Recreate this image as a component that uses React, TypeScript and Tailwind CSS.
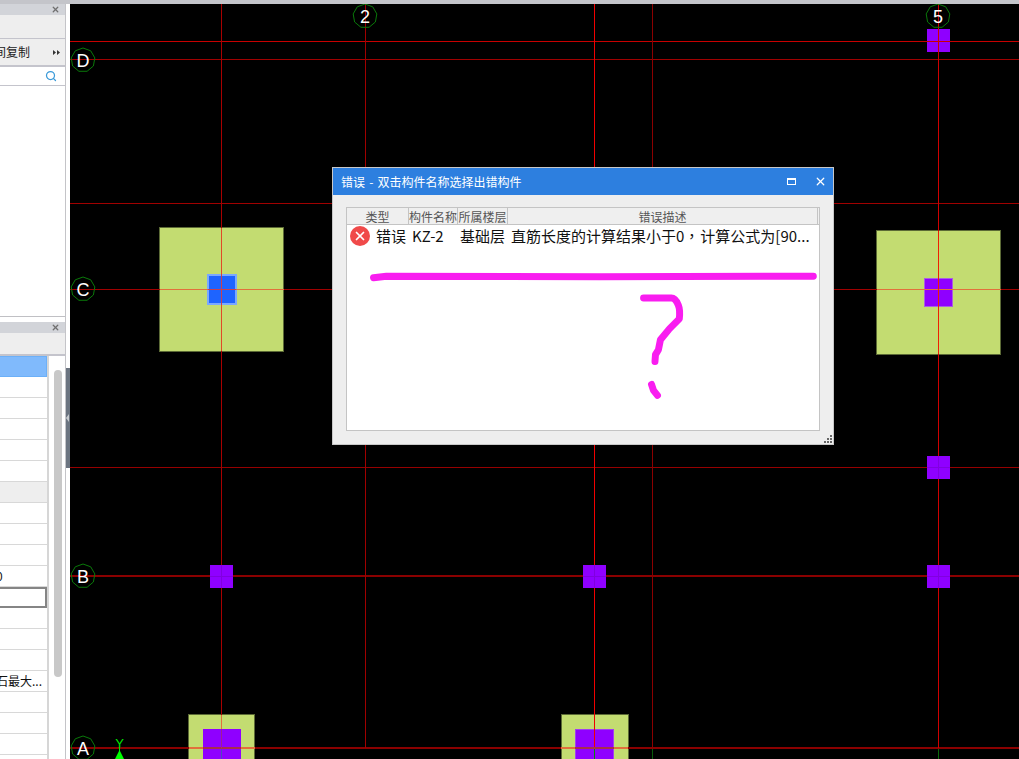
import React from "react";
import { Search, X } from "lucide-react";

const cjk = "font-['Noto_Sans_CJK_SC','Liberation_Sans',sans-serif]";

const hLines = [
  { y: 41, color: "#c80000", w: 1 },
  { y: 59, color: "#a00000", w: 1 },
  { y: 203, color: "#a00000", w: 1 },
  { y: 289, color: "#a00000", w: 1 },
  { y: 467, color: "#960000", w: 1 },
  { y: 576, color: "#8b0000", w: 2 },
  { y: 748, color: "#8b0000", w: 2 },
];

const vLines = [
  { x: 221, color: "#a80000", end: 759 },
  { x: 365, color: "#a00000", end: 748 },
  { x: 594, color: "#f00000", end: 748 },
  { x: 652, color: "#8b0000", end: 748 },
  { x: 938, color: "#d00000", end: 748 },
];

// these sit over the axis lines, the axes only show faintly through them
const smallCols = [
  [927, 456],
  [927, 565],
  [210, 565],
  [583, 565],
];

const axes = [
  { label: "2", x: 365, y: 16 },
  { label: "5", x: 938, y: 16 },
  { label: "D", x: 83, y: 60 },
  { label: "C", x: 83, y: 289 },
  { label: "B", x: 83, y: 576 },
  { label: "A", x: 83, y: 748 },
];

// the axis bubbles are coarse polygons in the cad view, not real circles
const bubble = (cx: number, cy: number) =>
  Array.from({ length: 9 }, (_, i) => {
    const a = (i / 9) * Math.PI * 2 - Math.PI / 2;
    return `${cx + Math.cos(a) * 12},${cy + Math.sin(a) * 12}`;
  }).join(" ");

const CadDrawing = () => (
  <svg className="block w-full h-full" viewBox="70 4 949 755" shapeRendering="crispEdges">
    <rect x="159.5" y="227.5" width="124" height="124" fill="#c3dc71" stroke="#5c6a36" strokeWidth="1" />
    <rect x="876.5" y="230.5" width="124" height="124" fill="#c3dc71" stroke="#5c6a36" strokeWidth="1" />
    <rect x="188.5" y="714.5" width="66" height="60" fill="#c3dc71" stroke="#5c6a36" strokeWidth="1" />
    <rect x="561" y="714.5" width="67" height="60" fill="#c3dc71" stroke="#5c6a36" strokeWidth="1" />

    <rect x="208" y="275" width="28" height="29" fill="#1e64ff" stroke="#7aa8ff" strokeWidth="2" />
    <rect x="924.5" y="278.5" width="28" height="28" fill="#8f00ff" stroke="#a860e0" strokeWidth="1" />
    <rect x="203" y="729" width="38" height="40" fill="#8f00ff" />
    <rect x="575.5" y="729.5" width="38" height="40" fill="#8f00ff" stroke="#a040f0" strokeWidth="1" />
    <rect x="927" y="29" width="23" height="23" fill="#8f00ff" />

    {hLines.map((l) => (
      <line key={l.y} x1="70" x2="1019" y1={l.w === 1 ? l.y + 0.5 : l.y} y2={l.w === 1 ? l.y + 0.5 : l.y} stroke={l.color} strokeWidth={l.w} />
    ))}
    {vLines.map((l) => (
      <line key={l.x} x1={l.x + 0.5} x2={l.x + 0.5} y1="4" y2={l.end} stroke={l.color} strokeWidth="1" />
    ))}

    {/* where the axes cross the footings they show lighter */}
    <line x1="160" x2="284" y1="289.5" y2="289.5" stroke="#e2703c" />
    <line x1="221.5" x2="221.5" y1="228" y2="351" stroke="#e04a28" />
    <line x1="877" x2="1001" y1="289.5" y2="289.5" stroke="#e2703c" />
    <line x1="938.5" x2="938.5" y1="231" y2="354" stroke="#f02000" />
    <line x1="189" x2="255" y1="748" y2="748" stroke="#e2703c" strokeWidth="2" />
    <line x1="561" x2="628" y1="748" y2="748" stroke="#e2703c" strokeWidth="2" />
    <line x1="221.5" x2="221.5" y1="715" y2="729" stroke="#e2703c" />
    <line x1="203" x2="241" y1="748" y2="748" stroke="#a83048" strokeWidth="2" />
    <line x1="575" x2="614" y1="748" y2="748" stroke="#a83048" strokeWidth="2" />
    <line x1="221.5" x2="221.5" y1="729" y2="748" stroke="#a02090" />
    <line x1="221.5" x2="221.5" y1="749" y2="759" stroke="#5048c0" />
    <line x1="208" x2="236" y1="289.5" y2="289.5" stroke="#c84050" />
    <line x1="221.5" x2="221.5" y1="275" y2="304" stroke="#c84050" />
    <line x1="594.5" x2="594.5" y1="749" y2="759" stroke="#0a8a0a" />
    <line x1="652.5" x2="652.5" y1="749" y2="759" stroke="#0a5a0a" />
    <line x1="938.5" x2="938.5" y1="749" y2="759" stroke="#0a6a0a" />

    {smallCols.map(([x, y]) => (
      <g key={`${x}-${y}`}>
        <rect x={x} y={y} width="23" height="23" fill="#8f00ff" />
        <line x1={x} x2={x + 23} y1={y + 11.5} y2={y + 11.5} stroke="#8000e0" />
        <line x1={x + 11.5} x2={x + 11.5} y1={y} y2={y + 23} stroke="#8000e0" />
      </g>
    ))}

    {axes.map((a) => (
      <g key={a.label}>
        <polygon points={bubble(a.x, a.y)} fill="none" stroke="#0a7a0a" strokeWidth="1" shapeRendering="auto" />
        <text x={a.x} y={a.y + 6.5} textAnchor="middle" fill="#ffffff" fontSize="18" fontFamily="Liberation Sans, sans-serif" shapeRendering="auto">
          {a.label}
        </text>
      </g>
    ))}

    <text x="119.5" y="748" textAnchor="middle" fill="#00e800" fontSize="13" fontFamily="Liberation Sans, sans-serif">
      Y
    </text>
    <line x1="119.5" x2="119.5" y1="747" y2="752" stroke="#00e800" />
    <polygon points="119.5,750 124,759 115,759" fill="#00ff00" shapeRendering="auto" />
  </svg>
);

const ScribbleOverlay = () => (
  <svg className="absolute inset-0 w-full h-full pointer-events-none" viewBox="332 167 502 278" fill="none" stroke="#f91df0" strokeLinecap="round" strokeLinejoin="round">
    <path d="M372 277.5 L385 276 L600 276.5 L815 276" strokeWidth="7" />
    <path d="M644 298 L672 298 Q676 298 679 305 Q681 310 680 319 L670 329 L661 340 L659 350 L656 355 L655.5 362" strokeWidth="7" />
    <path d="M652 385 L654 391 L658 396" strokeWidth="7" />
  </svg>
);

const ErrorDialog = () => (
  <div className={`absolute left-[262px] top-[163px] w-[502px] h-[278px] flex flex-col bg-[#eeeeee] border border-[#c8c8c8] ${cjk}`}>
    <div className="h-[27px] shrink-0 flex items-center bg-[#2d7fdf] text-white text-[12px] pl-[8px]">
      <span className="flex-1 [word-spacing:1.5px]">错误 - 双击构件名称选择出错构件</span>
      <span className="w-[9px] h-[7px] border border-white border-t-2 mr-[18px]"></span>
      <X size={13} strokeWidth={2.25} className="mr-[6px]" />
    </div>
    <div className="flex-1 flex px-[13px] pt-[12px] pb-[13px] min-h-0">
      <div className="flex-1 flex flex-col bg-white border border-[#c4c4c4]">
        <div className="h-[17px] shrink-0 flex bg-[#efefef] border-b border-[#c4c4c4] text-[12px] leading-[17px] text-[#555555] text-center">
          <div className="w-[62px] border-r border-[#c4c4c4]">类型</div>
          <div className="w-[49px] border-r border-[#c4c4c4] whitespace-nowrap">构件名称</div>
          <div className="w-[50px] border-r border-[#c4c4c4] whitespace-nowrap">所属楼层</div>
          <div className="flex-1 border-r border-[#c4c4c4] mr-[1px]">错误描述</div>
        </div>
        <div className="h-[22px] flex items-center text-[15px] text-[#111111] whitespace-nowrap">
          <div className="w-[29px] pl-[3px]">
            <div className="w-[20px] h-[20px] rounded-full bg-[#f04a4a] flex items-center justify-center text-white">
              <X size={14} strokeWidth={3} />
            </div>
          </div>
          <div className="w-[36px]">错误</div>
          <div className="w-[48px]">KZ-2</div>
          <div className="w-[51px]">基础层</div>
          <div>
            直筋长度的计算结果小于0
            <span className="font-['Noto_Sans_CJK_TC',sans-serif] mr-[1px]">，</span>
            计算公式为[90...
          </div>
        </div>
      </div>
    </div>
    <div className="absolute right-[1px] bottom-[1px] grid grid-cols-3 grid-rows-3 gap-[1px] w-[8px] h-[8px]">
      <span></span>
      <span></span>
      <span className="bg-[#666666]"></span>
      <span></span>
      <span className="bg-[#666666]"></span>
      <span className="bg-[#666666]"></span>
      <span className="bg-[#666666]"></span>
      <span className="bg-[#666666]"></span>
      <span className="bg-[#666666]"></span>
    </div>
    <ScribbleOverlay />
  </div>
);

const PanelTitle = () => (
  <div className="h-[11px] shrink-0 flex items-center justify-end pr-[5px] bg-[#d2d4d9] text-[#707070]">
    <X size={9} strokeWidth={3.5} />
  </div>
);

const rowCount = 20;

const PropertyRows = () => (
  <div className="flex-1 flex min-h-0">
    <div className="w-[49px] border-r-2 border-[#d6d6d6] flex flex-col text-[12px] text-[#111111] overflow-hidden">
      {Array.from({ length: rowCount }, (_, i) => {
        if (i === 0) {
          return <div key={i} className="h-[21px] shrink-0 bg-[#80bafc] border border-l-0 border-[#6cb0f8]"></div>;
        }
        if (i === 11) {
          return <div key={i} className="h-[21px] shrink-0 bg-white border-2 border-l-0 border-[#858585]"></div>;
        }
        return (
          <div key={i} className={`h-[21px] shrink-0 flex items-center border-b border-[#d8d8d8] whitespace-nowrap ${i === 6 ? "bg-[#eeeeee]" : "bg-white"}`}>
            {i === 10 && <span className="-ml-[4px]">0</span>}
            {i === 15 && <span className="-ml-[4px]">石最大...</span>}
          </div>
        );
      })}
    </div>
    <div className="flex-1 bg-white pl-[5px] pt-[14px]">
      <div className="w-[8px] h-[307px] rounded-[4px] bg-[#c8c8c8]"></div>
    </div>
  </div>
);

const SidePanels = () => (
  <div className={`relative w-[70px] shrink-0 flex flex-col bg-white overflow-hidden ${cjk}`}>
    <div className="w-[66px] flex-1 flex flex-col border-r border-[#c4c4c8]">
      <PanelTitle />
      <div className="h-[24px] shrink-0 bg-[#eeeeee] border-b border-[#c4c4cc]"></div>
      <div className="h-[28px] shrink-0 flex items-center bg-[#eeeeee] border-b-2 border-[#c4c4cc] whitespace-nowrap text-[12px] text-[#222222]">
        <span className="-ml-[6px]">间复制</span>
        <svg className="ml-[23px]" width="7" height="5" viewBox="0 0 7 5" fill="#333333">
          <path d="M0 0 L3 2.5 L0 5 Z M4 0 L7 2.5 L4 5 Z" />
        </svg>
      </div>
      <div className="h-[19px] shrink-0 flex items-center justify-end pr-[8px] bg-white border-b border-[#c4c4cc] text-[#3a9ad9]">
        <Search size={12} strokeWidth={2.5} />
      </div>
      <div className="h-[231px] shrink-0 bg-white border-b border-[#c0c0c4]"></div>
      <div className="h-[5px] shrink-0 bg-white"></div>
      <PanelTitle />
      <div className="h-[23px] shrink-0 bg-[#eeeeee] border-b-2 border-[#c4c4cc]"></div>
      <PropertyRows />
    </div>
    {/* collapse handle of the splitter */}
    <div className="absolute left-[66px] top-[364px] w-[4px] h-[100px] bg-[#6b7480] flex items-center">
      <span className="w-0 h-0 border-y-[4px] border-y-transparent border-r-[3px] border-r-[#c8ccd0]"></span>
    </div>
  </div>
);

export default function App() {
  return (
    <div className="w-[1019px] h-[759px] flex flex-col overflow-hidden bg-black">
      <div className="h-[4px] shrink-0 bg-[#c4c5ca]"></div>
      <div className="flex-1 flex min-h-0">
        <SidePanels />
        <div className="relative flex-1 bg-black">
          <CadDrawing />
          <ErrorDialog />
        </div>
      </div>
    </div>
  );
}
